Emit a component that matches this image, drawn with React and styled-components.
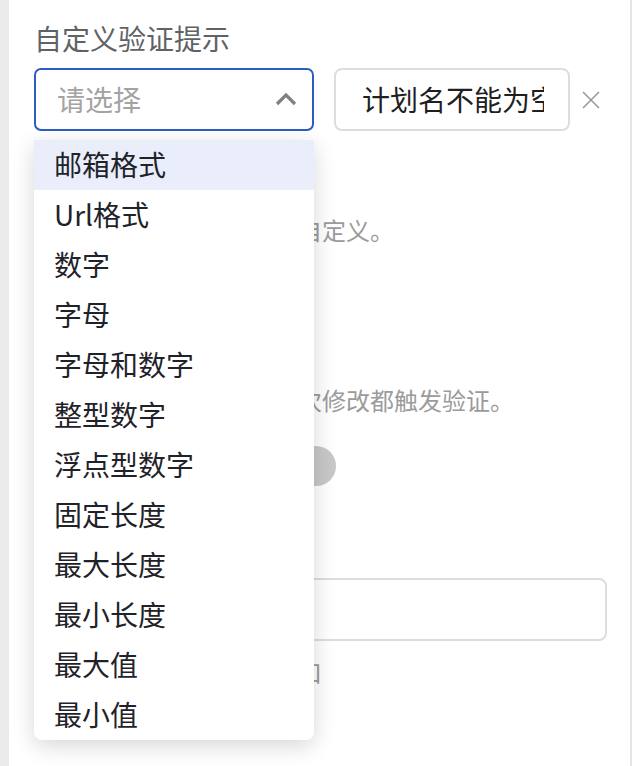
import React from "react";
import styled, { createGlobalStyle } from "styled-components";

const Global = createGlobalStyle`
  html, body { margin: 0; padding: 0; background: #ffffff; }
  body { font-family: "Noto Sans CJK SC", "Noto Sans", sans-serif; }
  * { box-sizing: border-box; }
`;

const Shell = styled.div`
  display: flex;
  width: 634px;
  height: 766px;
  overflow: hidden;
`;

const Strip = styled.div`
  width: 9px;
  flex: none;
  background: #ebebeb;
`;

const Panel = styled.div`
  flex: 1;
  background: #ffffff;
  border-right: 2px solid #e6e6e6;
  padding: 18px 23px 20px 25px;
  display: flex;
  flex-direction: column;
`;

const Edge = styled.div`
  width: 2px;
  flex: none;
  background: #ffffff;
`;

const Label = styled.div`
  font-size: 28px;
  line-height: 40px;
  color: #606266;
`;

const Row = styled.div`
  display: flex;
  align-items: center;
  margin-top: 10px;
  height: 63px;
`;

const SelectWrap = styled.div`
  position: relative;
  width: 280px;
  height: 63px;
  flex: none;
`;

const SelectBox = styled.div`
  height: 100%;
  border: 2px solid #2c5ec2;
  border-radius: 7px;
  display: flex;
  align-items: center;
  justify-content: space-between;
  padding: 0 15px 2px 21px;
  background: #fff;
`;

const Placeholder = styled.span`
  font-size: 28px;
  line-height: 40px;
  color: #a3a3a3;
`;

const Menu = styled.ul`
  position: absolute;
  left: 0;
  top: calc(100% + 9px);
  width: 280px;
  margin: 0;
  padding: 0;
  list-style: none;
  background: #fff;
  border-radius: 0 0 8px 8px;
  box-shadow: 0 6px 22px rgba(0, 0, 0, 0.16);
  z-index: 10;
`;

const Item = styled.li`
  height: 50px;
  display: flex;
  align-items: center;
  padding: 0 0 2px 20px;
  font-size: 28px;
  color: #1f2329;
  background: ${(p) => (p.$active ? "#e9eefa" : "transparent")};
`;

const TextBox = styled.div`
  width: 236px;
  height: 63px;
  margin-left: 20px;
  flex: none;
  border: 2px solid #dddddd;
  border-radius: 8px;
  padding: 0 24px 2px 26px;
  display: flex;
  align-items: center;
  background: #fff;
`;

const BoxText = styled.span`
  display: block;
  width: 100%;
  overflow: hidden;
  white-space: nowrap;
  font-size: 28px;
  line-height: 40px;
  color: #1f1f1f;
`;

const Clear = styled.button`
  margin-left: 12px;
  width: 18px;
  height: 18px;
  padding: 0;
  border: none;
  background: none;
  display: flex;
`;

const Help = styled.div`
  margin-top: ${(p) => p.$mt || 0}px;
  font-size: 24px;
  line-height: 34px;
  color: #9b9b9b;
  white-space: nowrap;
`;

const SwitchRow = styled.div`
  margin-top: 29px;
  display: flex;
  align-items: center;
  height: 40px;
  padding-left: 222px;
`;

const Track = styled.div`
  width: 80px;
  height: 40px;
  border-radius: 20px;
  background: #c8c8c8;
  position: relative;
`;

const Knob = styled.div`
  position: absolute;
  left: 3px;
  top: 3px;
  width: 34px;
  height: 34px;
  border-radius: 50%;
  background: #fff;
`;

const WideInput = styled.div`
  margin-top: 92px;
  height: 63px;
  border: 2px solid #dddddd;
  border-radius: 8px;
  background: #fff;
`;

const items = [
  "邮箱格式",
  "Url格式",
  "数字",
  "字母",
  "字母和数字",
  "整型数字",
  "浮点型数字",
  "固定长度",
  "最大长度",
  "最小长度",
  "最大值",
  "最小值",
];

export default function App() {
  return (
    <>
      <Global />
      <Shell>
        <Strip />
        <Panel>
          <Label>自定义验证提示</Label>
          <Row>
            <SelectWrap>
              <SelectBox>
                <Placeholder>请选择</Placeholder>
                <svg width="22" height="14" viewBox="0 0 22 14">
                  <polyline
                    points="2,12 11,3 20,12"
                    fill="none"
                    stroke="#808080"
                    strokeWidth="3.2"
                  />
                </svg>
              </SelectBox>
              <Menu>
                {items.map((t, i) => (
                  <Item key={t} $active={i === 0}>
                    {t}
                  </Item>
                ))}
              </Menu>
            </SelectWrap>
            <TextBox>
              <BoxText>计划名不能为空</BoxText>
            </TextBox>
            <Clear aria-label="clear">
              <svg width="18" height="18" viewBox="0 0 18 18">
                <path
                  d="M1 1 L17 17 M17 1 L1 17"
                  stroke="#9a9a9a"
                  strokeWidth="1.6"
                  fill="none"
                />
              </svg>
            </Clear>
          </Row>
          <Help $mt={82}>选择常用的验证规则，或自定义。</Help>
          <Help $mt={136}>开启后输入框的内容每一次修改都触发验证。</Help>
          <SwitchRow>
            <Track>
              <Knob />
            </Track>
          </SwitchRow>
          <WideInput />
          <Help $mt={14}>提交时调用的后台验证接口</Help>
        </Panel>
        <Edge />
      </Shell>
    </>
  );
}
